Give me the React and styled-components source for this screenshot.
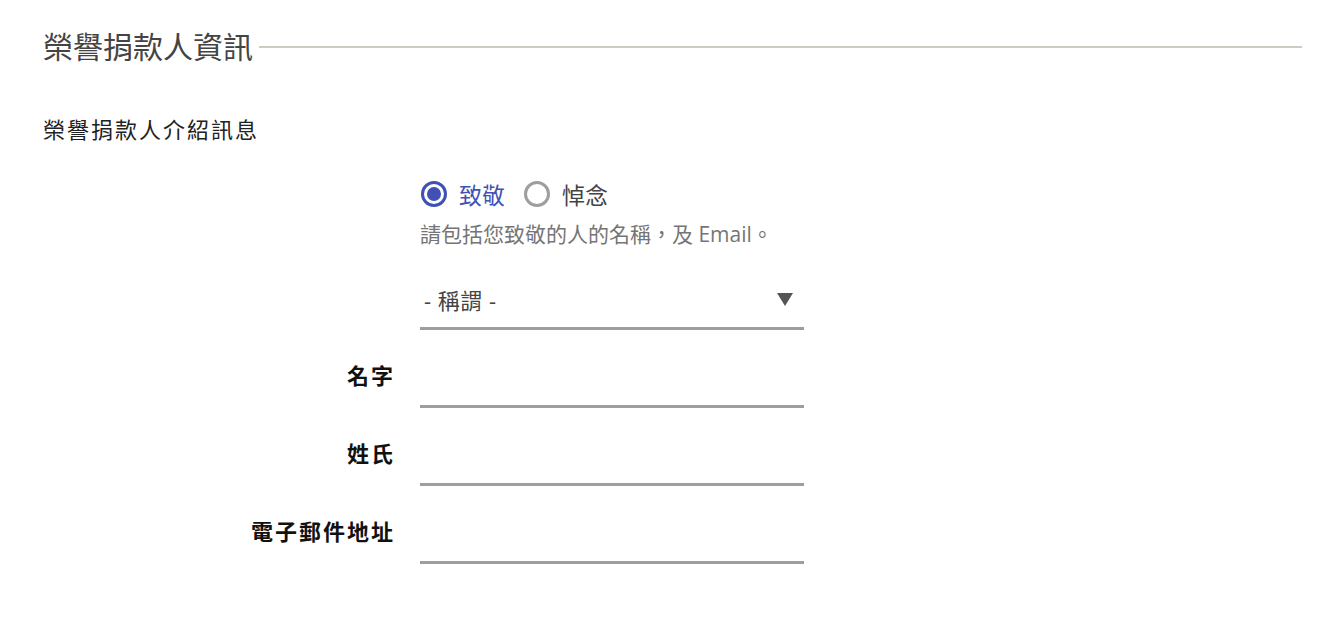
import React, { useState } from "react";
import styled, { createGlobalStyle } from "styled-components";

const GlobalStyle = createGlobalStyle`
  html, body {
    margin: 0;
    padding: 0;
    background: #fff;
  }
  body {
    font-family: "Open Sans", "Noto Sans CJK TC", sans-serif;
    color: #222;
  }
`;

const Page = styled.div`
  padding: 22px 35px 40px 43px;
`;

const Fieldset = styled.fieldset`
  border: 0;
  margin: 0;
  padding: 0;
  min-width: 0;
`;

const Legend = styled.div`
  display: flex;
  align-items: center;
  gap: 6px;
  font-size: 30px;
  line-height: 50px;
  color: #444;
  font-weight: 400;

  &::after {
    content: "";
    flex: 1;
    height: 2px;
    background: #ccccbf;
  }
`;

const Intro = styled.p`
  margin: 42px 0 0;
  font-size: 22px;
  line-height: 30px;
  letter-spacing: 2px;
  color: #222;
`;

const Form = styled.div`
  display: grid;
  grid-template-columns: 352px 384px;
  column-gap: 25px;
  margin-top: 35px;
`;

const Field = styled.div`
  grid-column: 2;
`;

const RadioRow = styled.div`
  display: flex;
  align-items: center;
  gap: 18px;
  height: 30px;
`;

const RadioLabel = styled.label`
  display: flex;
  align-items: center;
  gap: 12px;
  font-size: 23px;
  color: ${({ $checked }) => ($checked ? "#3f51b5" : "#444")};
  cursor: pointer;
`;

const RadioCircle = styled.span`
  box-sizing: border-box;
  width: 26px;
  height: 26px;
  margin-left: 1px;
  border-radius: 50%;
  border: 3px solid ${({ $checked }) => ($checked ? "#3f51b5" : "#9e9e9e")};
  display: flex;
  align-items: center;
  justify-content: center;

  &::after {
    content: "";
    width: 14px;
    height: 14px;
    border-radius: 50%;
    background: #3f51b5;
    display: ${({ $checked }) => ($checked ? "block" : "none")};
  }
`;

const Hint = styled.div`
  margin-top: 11px;
  font-size: 21px;
  line-height: 28px;
  color: #757575;
`;

const SelectBox = styled.div`
  margin-top: 32px;
  display: flex;
  align-items: center;
  justify-content: space-between;
  height: 50px;
  padding: 0 11px 10px 4px;
  box-sizing: border-box;
  border-bottom: 3px solid #9e9e9e;
  font-size: 22px;
  letter-spacing: 0.5px;
  color: #444;
`;

const Arrow = styled.span`
  width: 0;
  height: 0;
  border-left: 8px solid transparent;
  border-right: 8px solid transparent;
  border-top: 13px solid #555;
  margin-top: 2px;
`;

const Label = styled.div`
  grid-column: 1;
  text-align: right;
  font-size: 22px;
  font-weight: 700;
  letter-spacing: 2px;
  color: #111;
  padding-top: 30px;
  line-height: 30px;
`;

const Input = styled.input`
  grid-column: 2;
  box-sizing: border-box;
  width: 384px;
  height: 78px;
  border: 0;
  border-bottom: 3px solid #9e9e9e;
  outline: none;
  font-size: 20px;
  font-family: inherit;
  padding: 30px 4px 0;
  background: transparent;
`;

const fields = ["名字", "姓氏", "電子郵件地址"];

export default function App() {
  const [kind, setKind] = useState("tribute");
  return (
    <Page>
      <GlobalStyle />
      <Fieldset>
        <Legend>榮譽捐款人資訊</Legend>
        <Intro>榮譽捐款人介紹訊息</Intro>
        <Form>
          <Field>
            <RadioRow>
              <RadioLabel $checked={kind === "tribute"} onClick={() => setKind("tribute")}>
                <RadioCircle $checked={kind === "tribute"} />
                致敬
              </RadioLabel>
              <RadioLabel $checked={kind === "memory"} onClick={() => setKind("memory")}>
                <RadioCircle $checked={kind === "memory"} />
                悼念
              </RadioLabel>
            </RadioRow>
            <Hint>請包括您致敬的人的名稱，及 Email。</Hint>
            <SelectBox>
              <span>- 稱謂 -</span>
              <Arrow />
            </SelectBox>
          </Field>
          {fields.map((f) => (
            <React.Fragment key={f}>
              <Label>{f}</Label>
              <Input type="text" aria-label={f} />
            </React.Fragment>
          ))}
        </Form>
      </Fieldset>
    </Page>
  );
}
